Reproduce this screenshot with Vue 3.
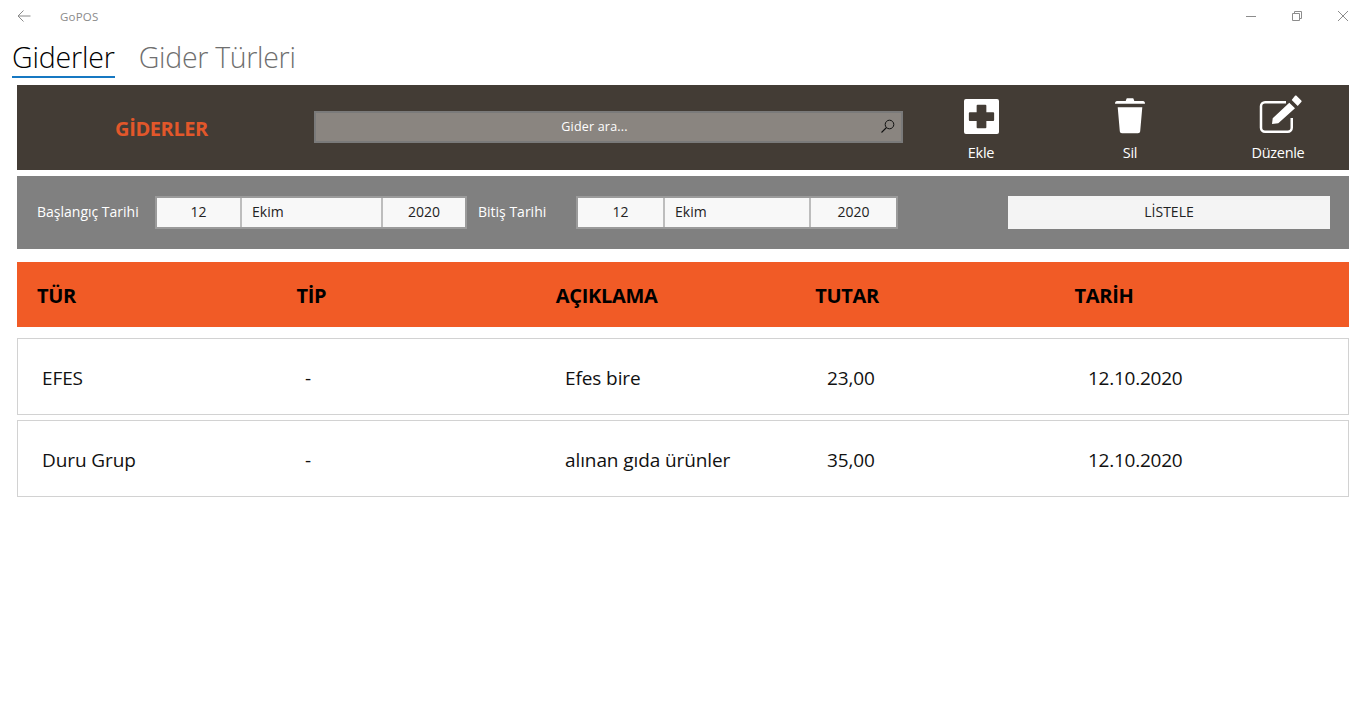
<script setup>
const rows = [
  { tur: 'EFES', tip: '-', aciklama: 'Efes bire', tutar: '23,00', tarih: '12.10.2020' },
  { tur: 'Duru Grup', tip: '-', aciklama: 'alınan gıda ürünler', tutar: '35,00', tarih: '12.10.2020' }
]
const heads = ['TÜR', 'TİP', 'AÇIKLAMA', 'TUTAR', 'TARİH']
</script>

<template>
  <div class="page">
    <div class="titlebar">
      <svg class="back" width="16" height="16" viewBox="0 0 16 16"><path d="M14.5 8H2M7.500 2.500 2 8l5.500 5.500" fill="none" stroke="#8a8a8a" stroke-width="1"/></svg>
      <span class="apptitle">GoPOS</span>
      <div class="winbtns">
        <svg width="12" height="12" viewBox="0 0 12 12"><path d="M1 6.500h10" stroke="#8c8c8c" fill="none"/></svg>
        <svg width="12" height="12" viewBox="0 0 12 12"><path d="M1.500 3.500h7v7h-7zM3.500 3.500v-2h7v7h-2" stroke="#8c8c8c" fill="none"/></svg>
        <svg width="12" height="12" viewBox="0 0 12 12"><path d="M1 1l10 10M11 1 1 11" stroke="#8c8c8c" fill="none"/></svg>
      </div>
    </div>
    <div class="tabs">
      <span class="tab active">Giderler</span>
      <span class="tab">Gider Türleri</span>
    </div>
    <div class="content">
      <div class="toolbar">
        <div class="heading">GİDERLER</div>
        <div class="search">
          <span>Gider ara...</span>
          <svg class="searchicon" width="16" height="16" viewBox="0 0 16 16"><circle cx="9.500" cy="6.500" r="4.300" fill="none" stroke="#111" stroke-width="1"/><path d="M6.500 9.500 1.500 14.500" stroke="#111" stroke-width="1.100"/></svg>
        </div>
        <div class="action a1">
          <svg width="35" height="35" viewBox="0 0 36 36"><path fill-rule="evenodd" fill="#fff" d="M2 0h32a2 2 0 0 1 2 2v32a2 2 0 0 1-2 2H2a2 2 0 0 1-2-2V2a2 2 0 0 1 2-2zM13 7v6.500H6a1 1 0 0 0-1 1v7a1 1 0 0 0 1 1h7V29a1 1 0 0 0 1 1h8a1 1 0 0 0 1-1v-6.500h7a1 1 0 0 0 1-1v-7a1 1 0 0 0-1-1h-7V7a1 1 0 0 0-1-1h-8a1 1 0 0 0-1 1z"/></svg>
          <span>Ekle</span>
        </div>
        <div class="action a2">
          <svg width="30" height="36" viewBox="0 0 30 36"><path fill="#fff" d="M10.700 3 11.500.8c.2-.4.500-.5 1-.5h5c.5 0 .8.100 1 .5L19.300 3H28c1.200 0 2 1 2 2.700H0C0 4 .8 3 2 3zM2.700 9.300h24.600l-2.100 24c-.1 1.200-1 2-2.200 2H7c-1.200 0-2.100-.8-2.200-2z"/></svg>
          <span>Sil</span>
        </div>
        <div class="action a3">
          <svg width="46" height="41" viewBox="0 0 46 41"><path fill="none" stroke="#fff" stroke-width="2.500" d="M28 8.250H7a4 4 0 0 0-4 4V33.750a4 4 0 0 0 4 4H29.750a4 4 0 0 0 4-4V24"/><path fill="#fff" d="M31.300 8.700 37 14.300 20.300 29.300 14 30l.7-5.700zM33.700 6l3.300-4.300c.5-.4 1-.4 1.500 0l4.800 4.700c.5.500.5 1 0 1.500L39.700 12z"/></svg>
          <span>Düzenle</span>
        </div>
      </div>

      <div class="filters">
        <span class="flabel l1">Başlangıç Tarihi</span>
        <div class="date d1">
          <span class="seg day">12</span><span class="seg month">Ekim</span><span class="seg year">2020</span>
        </div>
        <span class="flabel l2">Bitiş Tarihi</span>
        <div class="date d2">
          <span class="seg day">12</span><span class="seg month">Ekim</span><span class="seg year">2020</span>
        </div>
        <button class="list">LİSTELE</button>
      </div>

      <div class="thead">
        <span v-for="h in heads" :key="h">{{ h }}</span>
      </div>

      <div v-for="r in rows" :key="r.tur" class="row">
        <span>{{ r.tur }}</span>
        <span>{{ r.tip }}</span>
        <span>{{ r.aciklama }}</span>
        <span>{{ r.tutar }}</span>
        <span class="rowdate">{{ r.tarih }}</span>
      </div>
    </div>
  </div>
</template>

<style>
html, body { margin: 0; background: #fff; }
</style>

<style scoped>
.page {
  width: 1365px;
  height: 727px;
  background: #fff;
  overflow: hidden;
  font-family: "Open Sans", "Noto Sans", sans-serif;
  color: #111;
}
.titlebar {
  height: 32px;
  display: flex;
  align-items: center;
  position: relative;
}
.back { margin-left: 16px; }
.apptitle {
  margin-left: 28px;
  font-size: 11.5px;
  color: #8a8a8a;
  letter-spacing: 0.2px;
}
.winbtns {
  margin-left: auto;
  display: flex;
  gap: 34px;
  margin-right: 16px;
}
.tabs {
  height: 45px;
  display: flex;
  margin-left: 12px;
  gap: 24px;
  margin-top: 1px;
}
.tab {
  font-size: 28.5px;
  font-weight: 300;
  line-height: 44px;
  height: 45px;
  padding-top: 2px;
  box-sizing: border-box;
  color: #6f6f6f;
  letter-spacing: -0.3px;
  white-space: nowrap;
}
.tab.active {
  color: #000;
  letter-spacing: -0.15px;
  border-bottom: 2px solid #1678c2;
}
.content {
  margin: 7px 16px 0 17px;
}
.toolbar {
  height: 85px;
  background: #433c35;
  display: flex;
  align-items: center;
  color: #fff;
}
.heading {
  width: 297px;
  text-align: center;
  box-sizing: border-box;
  padding-right: 8px;
  padding-top: 2px;
  font-size: 20px;
  font-weight: 700;
  color: #e2572a;
  letter-spacing: -0.4px;
}
.search {
  width: 589px;
  height: 32px;
  box-sizing: border-box;
  background: #8a8580;
  border: 2px solid #7a7a7a;
  position: relative;
  display: flex;
  align-items: center;
  justify-content: center;
  font-size: 12.5px;
  letter-spacing: 0.2px;
  color: #fff;
  margin-top: -1px;
}
.search > span { position: relative; left: -14px; top: -1px; }
.searchicon { position: absolute; right: 5px; top: 5px; }
.action {
  display: flex;
  flex-direction: column;
  align-items: center;
  align-self: flex-start;
  padding-top: 14px;
  font-size: 14.5px;
  letter-spacing: -0.3px;
  width: 80px;
}
.action svg { display: block; }
.action span { margin-top: 9px; line-height: 20px; }
.a1 { margin-left: 38px; }
.a2 { margin-left: 69px; }
.a2 svg { margin-top: -1px; }
.a3 { margin-left: 68px; }
.a3 svg { margin-top: -5px; margin-left: 6px; margin-bottom: -1px; }
.filters {
  height: 73px;
  margin-top: 6px;
  background: #808080;
  display: flex;
  align-items: center;
  font-size: 14px;
  color: #fff;
}
.flabel { white-space: nowrap; padding-bottom: 2px; }
.l1 { margin-left: 20px; width: 118px; }
.l2 { margin-left: 11px; width: 98px; }
.date {
  display: flex;
  height: 33px;
  box-sizing: border-box;
  border: 2px solid #9b9b9b;
  margin-top: -1px;
  background: #bdbdbd;
  gap: 2px;
  color: #222;
  font-size: 14px;
}
.d1 { width: 312px; }
.d2 { width: 322px; }
.seg {
  background: #f8f8f8;
  display: flex;
  align-items: center;
  justify-content: center;
  padding-bottom: 2px;
  box-sizing: border-box;
}
.d1 .day { width: 83px; }
.d1 .month { width: 139px; }
.d1 .year { width: 82px; }
.d2 .day { width: 85px; }
.d2 .month { width: 144px; }
.d2 .year { width: 85px; }
.month { justify-content: flex-start; padding-left: 10px; }
.list {
  margin-left: 110px;
  width: 322px;
  height: 33px;
  margin-top: -1px;
  background: #f4f4f4;
  border: 0;
  padding: 0 0 1px;
  font: inherit;
  font-size: 14px;
  color: #222;
}
.thead {
  height: 65px;
  box-sizing: border-box;
  padding-top: 2px;
  margin-top: 13px;
  margin-bottom: 11px;
  background: #f15b26;
  display: grid;
  grid-template-columns: repeat(5, 259.4px);
  padding-left: 20px;
  align-items: center;
  font-size: 20px;
  font-weight: 700;
  color: #000;
  letter-spacing: -0.3px;
}
.row {
  height: 77px;
  box-sizing: border-box;
  border: 1px solid #d2d2d2;
  margin-bottom: 5px;
  display: grid;
  grid-template-columns: 263px 260px 262px 261px auto;
  padding-left: 24px;
  padding-top: 2px;
  align-items: center;
  font-size: 19px;
  color: #111;
  letter-spacing: -0.1px;
}
.rowdate { letter-spacing: -0.25px; }
</style>
